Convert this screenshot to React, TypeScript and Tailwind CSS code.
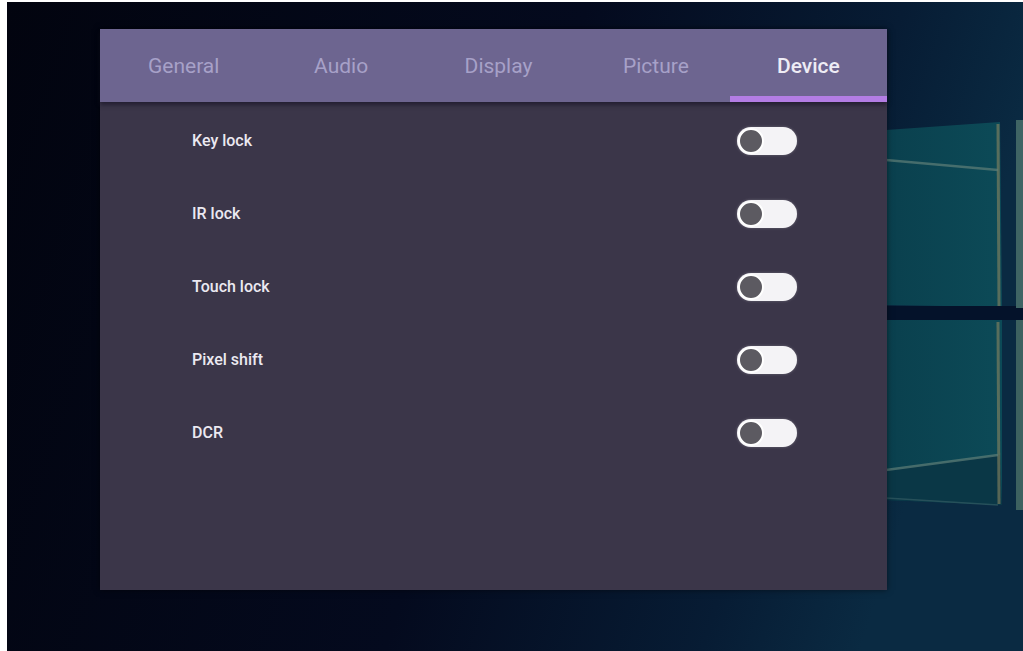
const tabs = ['General', 'Audio', 'Display', 'Picture', 'Device'];
const settings = ['Key lock', 'IR lock', 'Touch lock', 'Pixel shift', 'DCR'];

function Toggle() {
  return (
    <div className="flex h-[28px] w-[60px] items-center rounded-full bg-[#f4f3f6] pl-[1px] shadow-[0_0_3px_rgba(255,255,255,0.25)]">
      <div className="size-[26px] rounded-full border-[2px] border-white bg-[#5c5a61]" />
    </div>
  );
}

function Wallpaper() {
  return (
    <svg
      className="absolute inset-0 h-full w-full"
      viewBox="7 2 1016 649"
      preserveAspectRatio="none"
    >
      <defs>
        <linearGradient id="bg" x1="0" y1="0" x2="1" y2="0.2">
          <stop offset="0" stopColor="#02040f" />
          <stop offset="0.55" stopColor="#040a1e" />
          <stop offset="0.85" stopColor="#071c34" />
          <stop offset="1" stopColor="#0a2a42" />
        </linearGradient>
        <linearGradient id="pane" x1="0" y1="0" x2="1" y2="0">
          <stop offset="0" stopColor="#0a404e" />
          <stop offset="1" stopColor="#0c4a57" />
        </linearGradient>
      </defs>
      <rect x="7" y="2" width="1016" height="649" fill="url(#bg)" />
      {/* window panes */}
      <polygon points="886,130 1000,122 1002,307 886,305" fill="url(#pane)" />
      <polygon points="886,320 1002,320 1002,505 886,500" fill="url(#pane)" />
      <rect x="886" y="306" width="137" height="14" fill="#04122a" />
      <polygon points="886,470 1000,455 1002,505 886,500" fill="#0a3746" />
      <rect x="1016" y="120" width="7" height="188" fill="#3f6464" />
      <rect x="1016" y="320" width="7" height="190" fill="#3d6160" />
      {/* highlights */}
      <line x1="998" y1="124" x2="999" y2="306" stroke="#8b8660" strokeWidth="3" opacity="0.6" />
      <line x1="998" y1="322" x2="999" y2="504" stroke="#8b8660" strokeWidth="3" opacity="0.6" />
      <line x1="886" y1="160" x2="998" y2="170" stroke="#5f7f78" strokeWidth="2.5" opacity="0.7" />
      <line x1="886" y1="470" x2="998" y2="455" stroke="#5f7f78" strokeWidth="2.5" opacity="0.7" />
      <line x1="886" y1="498" x2="998" y2="505" stroke="#3a6268" strokeWidth="1.5" opacity="0.6" />
    </svg>
  );
}

export default function App() {
  return (
    <div
      className="flex h-[651px] w-[1023px] overflow-hidden bg-white pl-[7px] pt-[2px]"
      style={{ fontFamily: 'Roboto, "Noto Sans", sans-serif' }}
    >
      <div className="relative flex-1">
        <Wallpaper />
        <div className="relative ml-[93px] mt-[27px] flex h-[561px] w-[787px] flex-col bg-[#3b3649] shadow-[0_0_6px_rgba(0,0,0,0.5)]">
          <div className="flex h-[73px] bg-[#6d6590] shadow-[0_3px_4px_rgba(20,16,35,0.6)]">
            {tabs.map((tab) => {
              const active = tab === 'Device';
              return (
                <div key={tab} className="relative flex flex-1 items-center justify-center">
                  <span
                    className={
                      active
                        ? 'pt-[2px] text-[21px] font-medium text-[#eeecf5]'
                        : 'pl-[10px] pt-[2px] text-[21px] text-[#a7a1c8]'
                    }
                  >
                    {tab}
                  </span>
                  {active && (
                    <div className="absolute bottom-0 left-0 right-0 h-[6px] bg-[#b37de4]" />
                  )}
                </div>
              );
            })}
          </div>
          <div className="flex flex-col pt-[2px]">
            {settings.map((label) => (
              <div key={label} className="flex h-[73px] items-center justify-between pl-[92px] pr-[90px]">
                <span className="text-[16px] font-medium text-[#ebe9f1]">{label}</span>
                <Toggle />
              </div>
            ))}
          </div>
        </div>
      </div>
    </div>
  );
}
